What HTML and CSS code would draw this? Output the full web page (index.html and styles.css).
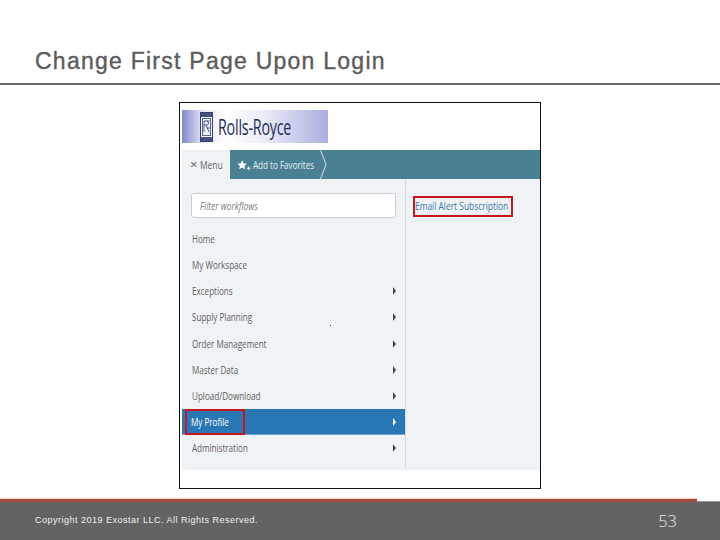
FILE: index.html
```html
<!DOCTYPE html>
<html lang="en">
<head>
<meta charset="utf-8">
<title>Change First Page Upon Login</title>
<link rel="stylesheet" href="styles.css">
</head>
<body>
<div class="slide">
  <header class="head"><h1>Change First Page Upon Login</h1></header>
  <main class="main">
    <div class="shot">
      <div class="logo">
        <svg class="crest" width="13" height="30" viewBox="0 0 13 30">
          <rect x="0.5" y="0.5" width="12" height="29" fill="#f2f3fa" stroke="#33406e"/>
          <rect x="1" y="1" width="11" height="4" fill="#46527e"/>
          <rect x="1" y="25" width="11" height="4" fill="#46527e"/>
          <rect x="2.500" y="6.500" width="8" height="17" fill="none" stroke="#5a6590"/>
          <path d="M4 9h2.500a1.800 1.800 0 0 1 0 4H4zM4 13v7M6 13l3 7M6.500 9h3M7 16h3" fill="none" stroke="#27345f" stroke-width=".8"/>
        </svg>
        <span class="brand">Rolls-Royce</span>
      </div>
      <div class="bar">
        <div class="tab"><span class="x">×</span><span class="t">Menu</span></div>
        <div class="fav">
          <svg width="14" height="12" viewBox="0 0 15 12"><path d="M5.500 1l1.500 3.200 3.500.4-2.600 2.400.7 3.500-3.100-1.800-3.100 1.800.7-3.500L.5 4.600l3.500-.4z" fill="#fff"/><path d="M10.500 9.500h4M12.500 7.500v4" stroke="#fff"/></svg>
          <span class="label"><span class="t">Add to Favorites</span></span>
          <svg class="chev" width="7" height="29" viewBox="0 0 7 29"><path d="M.5 0l5.500 14.500L.5 29" fill="none" stroke="#d5e2e6"/></svg>
        </div>
      </div>
      <div class="panel">
        <nav class="menu">
          <div class="filter"><span class="t">Filter workflows</span></div>
          <div class="row"><span class="t">Home</span></div>
          <div class="row"><span class="t">My Workspace</span></div>
          <div class="row more"><span class="t">Exceptions</span></div>
          <div class="row more"><span class="t">Supply Planning</span><span class="dot"></span></div>
          <div class="row more"><span class="t">Order Management</span></div>
          <div class="row more"><span class="t">Master Data</span></div>
          <div class="row more"><span class="t">Upload/Download</span></div>
          <div class="row more active"><span class="mark"><span class="t">My Profile</span></span></div>
          <div class="row more"><span class="t">Administration</span></div>
        </nav>
        <aside class="side"><span class="alert"><span class="t">Email Alert Subscription</span></span></aside>
      </div>
    </div>
  </main>
  <footer class="foot">
    <div class="rule"></div>
    <div class="band">
      <span class="copy">Copyright 2019 Exostar LLC. All Rights Reserved.</span>
      <span class="num">53</span>
    </div>
  </footer>
</div>
</body>
</html>
```
FILE: styles.css
```css
* { box-sizing: border-box; }
html, body { margin: 0; padding: 0; background: #fff; }
.slide { width: 720px; height: 540px; display: flex; flex-direction: column; overflow: hidden; font-family: "Liberation Sans", Arial, sans-serif; }
.head { height: 85px; flex: none; border-bottom: 2px solid #6a6a6a; padding: 47px 0 0 35px; }
h1 { margin: 0; font-size: 23px; line-height: 28px; font-weight: 400; color: #5c5c5c; letter-spacing: 1.25px; -webkit-text-stroke: 0.4px #5c5c5c; }
.main { flex: 1; display: flex; justify-content: center; align-items: flex-start; padding-top: 17px; }
.shot { width: 362px; height: 387px; border: 1px solid #111; padding: 7px 0 0 2px; font-family: "Open Sans", sans-serif; font-size: 10.5px; color: #606060; }
.t { display: inline-block; white-space: nowrap; transform: scaleX(0.77); transform-origin: left center; }
.logo { width: 146px; height: 33px; background: linear-gradient(90deg, #7f88cc 0%, #e4e6f5 14%, #fff 30%, #eceef8 55%, #a9aee0 100%); display: flex; align-items: center; padding-left: 18px; gap: 5px; }
.crest { flex: none; }
.brand { font-size: 21px; color: #1f2c5c; white-space: nowrap; transform: scaleX(0.68); transform-origin: left center; letter-spacing: -0.3px; }
.bar { margin-top: 7px; height: 29px; display: flex; background: #4a8192; }
.tab { width: 48px; flex: none; background: #f0f3f6; display: flex; align-items: center; padding-left: 8px; gap: 3px; }
.tab .t { transform: scaleX(0.8); }
.x { font-size: 13px; line-height: 1; }
.fav { display: flex; align-items: center; padding-left: 7px; color: #e6eff2; }
.label { width: 67px; margin-left: 2px; }
.chev { flex: none; }
.panel { height: 291px; display: flex; background: #f0f3f6; }
.menu { width: 224px; border-right: 1px solid #d6dce2; flex: none; padding-top: 14px; }
.filter { width: 205px; height: 25px; margin: 0 0 8px 9px; background: #fff; border: 1px solid #c9ced3; border-radius: 3px; padding-left: 8px; line-height: 24px; font-style: italic; color: #808080; }
.filter .t { transform: scaleX(0.8); }
.row { height: 26.15px; display: flex; align-items: center; padding-left: 9.5px; position: relative; }
.more::after { content: ""; position: absolute; right: 9px; top: 50%; margin-top: -4px; border-left: 3.5px solid #444; border-top: 4px solid transparent; border-bottom: 4px solid transparent; }
.dot { position: absolute; left: 148px; top: 21px; width: 1px; height: 1px; background: #333; }
.active { background: #2a77b5; color: #fff; border-bottom: 1px solid #6aa6d8; }
.active::after { border-left-color: #fff; }
.mark { height: 26px; width: 60px; margin-left: -6.5px; padding-left: 4px; display: flex; align-items: center; border: 2px solid #c8161d; }
.side { flex: 1; padding: 17px 0 0 7px; }
.alert { display: block; width: 100px; height: 21px; line-height: 17px; border: 2px solid #c8161d; color: #3a78a8; }
.alert .t { transform: scaleX(0.8); }
.foot { flex: none; height: 42px; display: flex; flex-direction: column; }
.rule { height: 4px; background: linear-gradient(#f0cfc9 0 1px, #a84a3c 1px 4px) left top / 697px 4px no-repeat, linear-gradient(#fff 0 3px, #9a9a9a 3px 4px); }
.band { flex: 1; background: #636363; display: flex; justify-content: space-between; align-items: center; padding: 0 43px 2px 35px; color: #f2f2f2; }
.copy { font-size: 9px; letter-spacing: 0.5px; font-weight: 400; }
.num { font-family: "Open Sans", sans-serif; font-weight: 300; font-size: 16.500px; color: #e8e8e8; }
```
